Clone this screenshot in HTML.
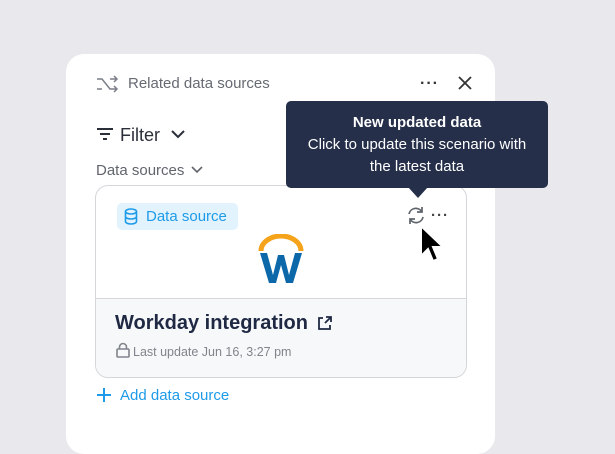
<!DOCTYPE html>
<html><head><style>
*{margin:0;padding:0;box-sizing:border-box}
body{width:615px;height:422px;background:#e9e9ed;font-family:"Liberation Sans",sans-serif;position:relative;overflow:hidden}
.panel{position:absolute;left:66px;top:54px;width:429px;height:400px;background:#fff;border-radius:18px}
.abs{position:absolute}
.card{position:absolute;left:95px;top:185px;width:372px;height:193px;border:1px solid #d4d6da;border-radius:13px;overflow:hidden;background:#fff}
.card .bot{position:absolute;left:0;top:112px;right:0;bottom:0;background:#f7f8fa;border-top:1px solid #d4d6da}
.tip{position:absolute;left:286px;top:101px;width:262px;height:87px;background:#252f49;border-radius:5px;color:#fff;text-align:center;font-size:15px;line-height:22px;padding-top:11px}
</style></head><body>
<div class="panel"></div>
<svg class="abs" style="left:96px;top:75px" width="24" height="18" viewBox="0 0 24 18" fill="none" stroke="#7b7f87" stroke-width="1.5"><path d="M1 4h5l8 10h7M1 14h5M14 4h7M18 1l3 3-3 3M18 11l3 3-3 3"/></svg>
<div class="abs" style="left:128px;top:75px;font-size:15px;color:#666a72">Related data sources</div>
<div class="abs" style="left:420px;top:75px;font-size:16px;color:#333;letter-spacing:1px;font-weight:bold">···</div>
<svg class="abs" style="left:458px;top:76px" width="14" height="14" stroke="#333" stroke-width="1.8"><path d="M1 1l12 12M13 1L1 13"/></svg>
<svg class="abs" style="left:96px;top:127px" width="18" height="14" stroke="#2b2f3a" stroke-width="2"><path d="M1 2h16M4 7h10M7 12h4"/></svg>
<div class="abs" style="left:120px;top:125px;font-size:18px;color:#2b2f3a">Filter</div>
<svg class="abs" style="left:171px;top:130px" width="14" height="9" fill="none" stroke="#2b2f3a" stroke-width="2"><path d="M1 1l6 6 6-6"/></svg>
<div class="abs" style="left:96px;top:162px;font-size:15px;color:#61656d">Data sources</div>
<svg class="abs" style="left:191px;top:166px" width="12" height="8" fill="none" stroke="#61656d" stroke-width="1.6"><path d="M1 1l5 5 5-5"/></svg>
<div class="card"><div class="bot"></div></div>
<div class="abs" style="left:117px;top:203px;width:121px;height:27px;background:#e2f3fd;border-radius:5px"></div>
<svg class="abs" style="left:124px;top:208px" width="14" height="17" fill="none" stroke="#1e9be8" stroke-width="1.6"><ellipse cx="7" cy="3.5" rx="5.5" ry="2.5"/><path d="M1.5 3.5v10c0 1.4 2.5 2.5 5.5 2.5s5.5-1.1 5.5-2.5v-10M1.5 8.5c0 1.4 2.5 2.5 5.5 2.5s5.5-1.1 5.5-2.5"/></svg>
<div class="abs" style="left:146px;top:208px;font-size:15px;color:#1e9be8">Data source</div>
<svg class="abs" style="left:406px;top:206px" width="20" height="19" fill="none" stroke="#5e636b" stroke-width="1.7"><path d="M3 8a7 7 0 0 1 13-2M17 11a7 7 0 0 1-13 2M16 1v5h-5M4 18v-5h5"/></svg>
<div class="abs" style="left:431px;top:207px;font-size:15px;color:#444;font-weight:bold;letter-spacing:1px">···</div>
<svg class="abs" style="left:256px;top:234px" width="50" height="52"><path d="M5 17A20 15 0 0 1 45 17" fill="none" stroke="#f5a31a" stroke-width="5"/><path d="M4 19l9 30h7l5-18 5 18h7l9-30h-7l-6 22-5-20h-6l-5 20-6-22z" fill="#0c68a9"/></svg>
<div class="abs" style="left:115px;top:312px;font-size:20px;font-weight:bold;color:#1f2943">Workday integration</div>
<svg class="abs" style="left:317px;top:316px" width="15" height="15" fill="none" stroke="#1f2943" stroke-width="1.8"><path d="M6 2H2v11h11V9M8 7l6-6M9 1h5v5"/></svg>
<svg class="abs" style="left:116px;top:342px" width="14" height="16" fill="none" stroke="#80848b" stroke-width="1.6"><rect x="1" y="7" width="12" height="8" rx="1"/><path d="M3.5 7V5a3.5 3.5 0 0 1 7 0v2"/></svg>
<div class="abs" style="left:133px;top:345px;font-size:12.5px;color:#80848b">Last update Jun 16, 3:27 pm</div>
<svg class="abs" style="left:97px;top:388px" width="14" height="14" stroke="#1e9be8" stroke-width="2"><path d="M7 0v14M0 7h14"/></svg>
<div class="abs" style="left:120px;top:387px;font-size:15px;color:#1e9be8">Add data source</div>
<div class="tip"><b>New updated data</b><br>Click to update this scenario with<br>the latest data</div>
<svg class="abs" style="left:408px;top:187px" width="20" height="12"><path d="M0 0h20L10 11z" fill="#252f49"/></svg>
<svg class="abs" style="left:418px;top:224px" width="26" height="42"><path d="M3 2v30l7-7 5 12 5-2-5-12h10z" fill="#000" stroke="#fff" stroke-width="2"/></svg>
</body></html>
